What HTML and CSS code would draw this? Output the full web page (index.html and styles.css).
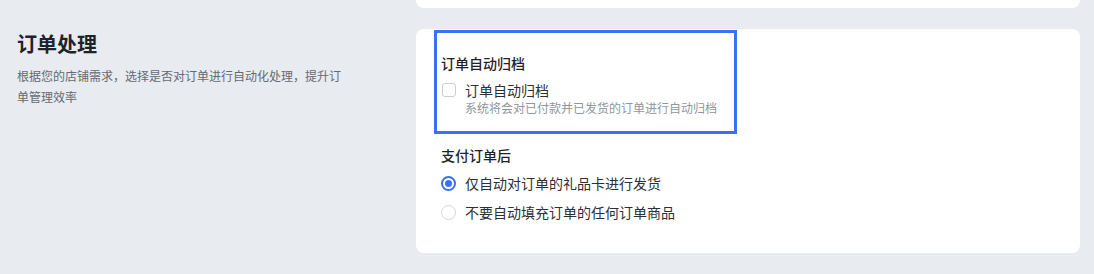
FILE: index.html
```html
<!DOCTYPE html>
<html>

<head>
    <title>订单设置</title>
    <link rel="stylesheet" href="styles.css">
</head>

<body>
    <div class="page">
        <div class="row row-prev">
            <div class="side"></div>
            <div class="card card-prev"></div>
        </div>

        <div class="row">
            <div class="side">
                <h2 class="side-title">订单处理</h2>
                <p class="side-desc">根据您的店铺需求，选择是否对订单进行自动化处理，提升订单管理效率</p>
            </div>

            <div class="card">
                <div class="group group-active">
                    <div class="group-title">订单自动归档</div>
                    <label class="option">
                        <span class="checkbox"></span>
                        <span class="option-text">订单自动归档</span>
                    </label>
                    <div class="option-help">系统将会对已付款并已发货的订单进行自动归档</div>
                </div>

                <div class="group">
                    <div class="group-title">支付订单后</div>
                    <label class="option option-radio">
                        <span class="radio radio-checked"></span>
                        <span class="option-text">仅自动对订单的礼品卡进行发货</span>
                    </label>
                    <label class="option option-radio">
                        <span class="radio"></span>
                        <span class="option-text">不要自动填充订单的任何订单商品</span>
                    </label>
                </div>
            </div>
        </div>

        <div class="row row-next">
            <div class="side"></div>
            <div class="card card-next"></div>
        </div>
    </div>
</body>

</html>
```

FILE: styles.css
```css
body {
    margin: 0;
    padding: 0;
    background-color: #e8ebef;
    font-family: "Noto Sans CJK SC", "Noto Sans", sans-serif;
    color: #1f2329;
}

.page {
    display: flex;
    flex-direction: column;
    gap: 21px;
    padding: 0 14px 0 17px;
}

.row {
    display: flex;
}

.side {
    width: 399px;
    flex-shrink: 0;
}

.card {
    flex: 1;
    background-color: #fff;
    border-radius: 8px;
    padding: 1px 0 30px 18px;
}

.card-prev {
    height: 8px;
    padding: 0;
    border-radius: 0 0 8px 8px;
}

.card-next {
    height: 8px;
    padding: 0;
    border-radius: 8px 8px 0 0;
}

.side-title {
    margin: 1px 0 0;
    font-size: 20px;
    line-height: 28px;
    font-weight: 600;
    color: #1f2329;
}

.side-desc {
    width: 330px;
    margin: 7px 0 0;
    font-size: 12px;
    line-height: 21px;
    color: #646a73;
}

.group {
    padding: 0 0 0 7px;
}

.group-active {
    box-sizing: border-box;
    width: 303px;
    margin-bottom: 10px;
    padding: 19px 16px 15px 4px;
    border: 3px solid #3a6ff8;
}

.group-title {
    font-size: 14px;
    line-height: 22px;
    font-weight: 500;
    margin-bottom: 6px;
}

.option {
    display: flex;
    align-items: center;
    gap: 9px;
    font-size: 14px;
    line-height: 20px;
    color: #1f2329;
}

.option-radio {
    line-height: 22px;
    margin-top: 7px;
}

.group-title + .option-radio {
    margin-top: 6px;
}

.option-text {
    color: #2b2f36;
}

.checkbox {
    box-sizing: border-box;
    width: 14px;
    height: 14px;
    margin-left: 1px;
    border: 1px solid #c9cdd4;
    border-radius: 3px;
    background-color: #fff;
}

.option-help {
    padding-left: 24px;
    font-size: 12px;
    line-height: 16px;
    color: #8f959e;
}

.radio {
    box-sizing: border-box;
    width: 15px;
    height: 15px;
    border: 1.5px solid #d3d6dd;
    border-radius: 50%;
    background-color: #fff;
    position: relative;
}

.radio-checked {
    border: 2px solid #3a6ff8;
}

.radio-checked::after {
    content: "";
    position: absolute;
    left: 2px;
    top: 2px;
    width: 7px;
    height: 7px;
    border-radius: 50%;
    background-color: #3a6ff8;
}
```
